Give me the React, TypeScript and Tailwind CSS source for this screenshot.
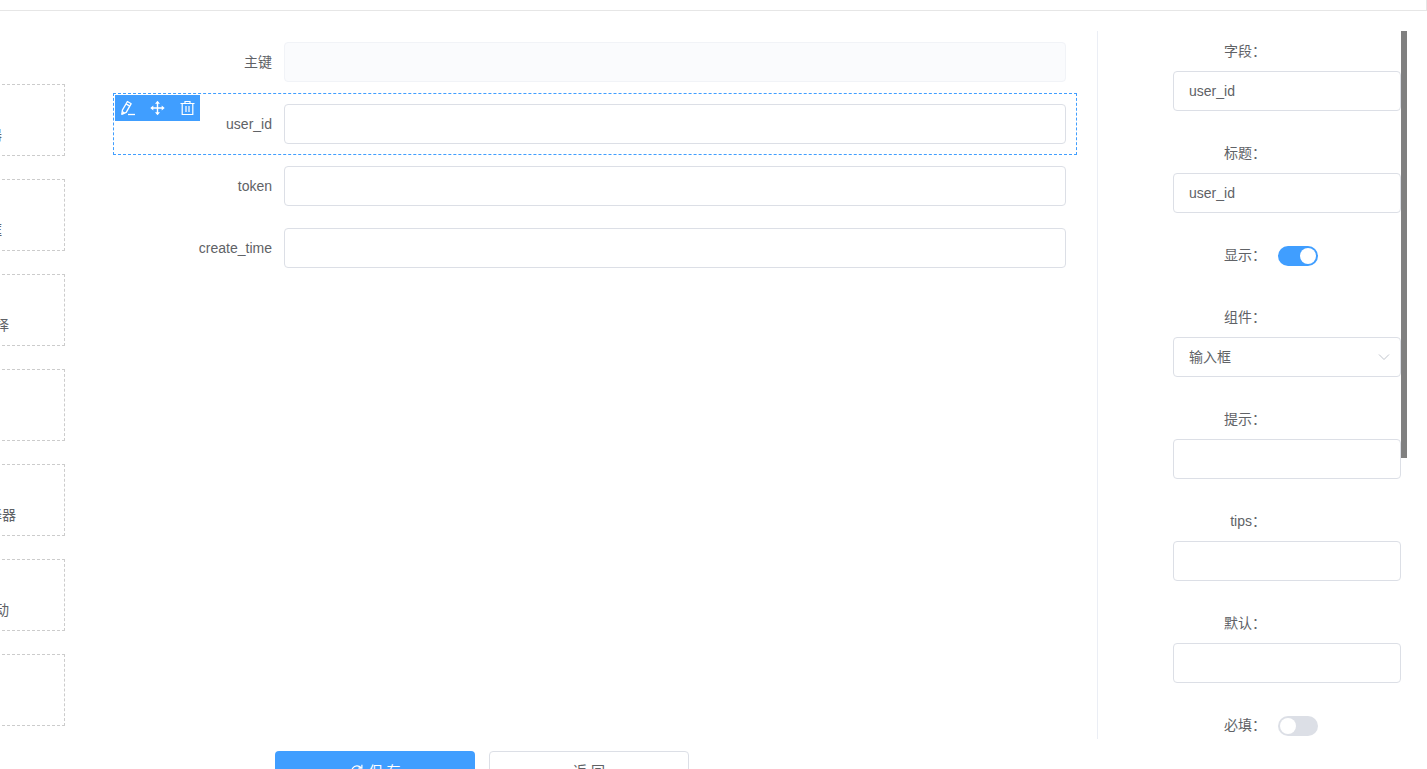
import { useState } from "react";

type Field = {
  name: string;
  label: string;
  disabled?: boolean;
};

type SettingInputProps = {
  id: string;
  label: string;
  defaultValue?: string;
};

type SettingSwitchProps = {
  id: string;
  label: string;
  checked: boolean;
  onChange: (checked: boolean) => void;
};

const widgets = [
  "计数器",
  "多选框",
  "下拉选择",
  "开关",
  "时间选择器",
  "级联联动",
  "上传",
];

const fields: Field[] = [
  { name: "id", label: "主键", disabled: true },
  { name: "user_id", label: "user_id" },
  { name: "token", label: "token" },
  { name: "create_time", label: "create_time" },
];

const iconProps = {
  viewBox: "0 0 16 16",
  fill: "none",
  stroke: "currentColor",
  className: "block size-4",
};

const EditIcon = () => (
  <svg {...iconProps} strokeWidth="1.3" strokeLinejoin="round">
    <path d="M7.4 1.5 11.2 3.7 6.2 12.3 1.8 14.3 2.4 10.1Z" />
    <path d="M6 3.9 9.8 6.1M2.2 11.6 4.5 13" />
    <path d="M8 14.5H15" />
  </svg>
);

const MoveIcon = () => (
  <svg {...iconProps} strokeWidth="1.4">
    <path d="M7.5 2.5V13.5M2 8H13" />
    <path
      d="M7.5 .8 10 3.8H5ZM7.5 15.2 5 12.2H10ZM.3 8 3.3 5.5V10.5ZM14.7 8 11.7 10.5V5.5Z"
      fill="currentColor"
      stroke="none"
    />
  </svg>
);

const DeleteIcon = () => (
  <svg {...iconProps} strokeWidth="1.2">
    <path d="M.5 3.5H14.5M5 3.5V1.5H10V3.5M2.2 3.5V14.5H12.8V3.5M6 6V12M9 6V12" />
  </svg>
);

const RefreshIcon = () => (
  <svg {...iconProps} className="block size-3.5" strokeWidth="1.4">
    <path d="M14 9A6 6 0 1 1 12.5 4M13.6 .8V4.8H9.6" />
  </svg>
);

const inputClass =
  "block h-10 w-full rounded border border-[#dcdfe6] bg-white px-[15px] text-sm text-[#606266] outline-none focus:border-[#409eff]";

const SettingInput: React.FC<SettingInputProps> = ({
  id,
  label,
  defaultValue,
}) => (
  <div className="mb-[22px]">
    <label htmlFor={id} className="block w-[105px] pr-3 text-right leading-10">
      {label}：
    </label>
    <input id={id} className={inputClass} defaultValue={defaultValue} />
  </div>
);

const SettingSwitch: React.FC<SettingSwitchProps> = ({
  id,
  label,
  checked,
  onChange,
}) => (
  <div className="mb-[22px] flex h-10 items-center">
    <label htmlFor={id} className="w-[105px] pr-3 text-right leading-10">
      {label}：
    </label>
    <input
      id={id}
      type="checkbox"
      role="switch"
      checked={checked}
      onChange={(e) => onChange(e.target.checked)}
      className="mt-0.5 flex h-5 w-10 cursor-pointer appearance-none items-center rounded-full bg-[#dcdfe6] px-0.5 before:size-4 before:rounded-full before:bg-white checked:justify-end checked:bg-[#409eff]"
    />
  </div>
);

const App: React.FC = () => {
  const [active, setActive] = useState("user_id");
  const [visible, setVisible] = useState(true);
  const [required, setRequired] = useState(false);

  return (
    <div
      lang="zh-CN"
      className="h-screen overflow-hidden bg-white font-['Liberation_Sans','Noto_Sans_CJK_SC',sans-serif] text-sm text-[#606266]"
    >
      <header className="h-[11px] border-r border-b border-[#e6e6e6]" />

      <main className="mt-5 flex h-[calc(100vh-61px)]">
        <ul className="flex w-[65px] shrink-0 flex-col items-end gap-[23px] overflow-hidden pt-[53px]">
          {widgets.map((widget) => (
            <li
              key={widget}
              className="flex h-[72px] w-[168px] shrink-0 items-end justify-center border border-dashed border-[#ccc] pb-2.5"
            >
              {widget}
            </li>
          ))}
        </ul>

        <form className="ml-12 min-w-0 flex-1 border-r border-[#ebeef5] pr-5">
          {fields.map((field) => (
            <div
              key={field.name}
              onClick={() => !field.disabled && setActive(field.name)}
              className={`relative flex items-center border border-dashed p-2.5 ${
                active === field.name
                  ? "border-[#409eff]"
                  : "border-transparent"
              }`}
            >
              {active === field.name && (
                <div className="absolute top-px left-px flex h-[26px] w-[85px] items-center gap-3.5 bg-[#409eff] pl-[5px] text-white">
                  <button type="button" aria-label="编辑">
                    <EditIcon />
                  </button>
                  <button type="button" aria-label="移动">
                    <MoveIcon />
                  </button>
                  <button type="button" aria-label="删除">
                    <DeleteIcon />
                  </button>
                </div>
              )}
              <label
                htmlFor={`field-${field.name}`}
                className="w-40 shrink-0 pr-3 text-right leading-10"
              >
                {field.label}
              </label>
              <input
                id={`field-${field.name}`}
                disabled={field.disabled}
                className={`${inputClass} disabled:border-[#f1f3f7] disabled:bg-[#fafbfd]`}
              />
            </div>
          ))}
        </form>

        <aside className="mr-5 flex w-[309px] shrink-0 overflow-hidden">
          <form className="ml-[75px] min-w-0 flex-1">
            <SettingInput id="name" label="字段" defaultValue="user_id" />
            <SettingInput id="title" label="标题" defaultValue="user_id" />
            <SettingSwitch
              id="visible"
              label="显示"
              checked={visible}
              onChange={setVisible}
            />
            <div className="mb-[22px]">
              <label
                htmlFor="component"
                className="block w-[105px] pr-3 text-right leading-10"
              >
                组件：
              </label>
              <div className="relative">
                <select
                  id="component"
                  className={`${inputClass} appearance-none`}
                >
                  <option>输入框</option>
                  <option>多选框</option>
                  <option>下拉选择</option>
                </select>
                <svg
                  viewBox="0 0 14 14"
                  fill="none"
                  stroke="currentColor"
                  className="pointer-events-none absolute top-[13px] right-2.5 size-3.5 text-[#c0c4cc]"
                >
                  <path d="M2 4.5 7 9.5 12 4.5" />
                </svg>
              </div>
            </div>
            <SettingInput id="placeholder" label="提示" />
            <SettingInput id="tips" label="tips" />
            <SettingInput id="default" label="默认" />
            <SettingSwitch
              id="required"
              label="必填"
              checked={required}
              onChange={setRequired}
            />
          </form>
          <div className="w-1.5 shrink-0">
            <div className="h-[427px] bg-[#808080]" />
          </div>
        </aside>
      </main>

      <footer className="mt-3 ml-[275px] flex gap-3.5">
        <button
          type="button"
          className="flex h-10 w-[200px] items-center justify-center gap-[5px] rounded bg-[#409eff] text-white"
        >
          <RefreshIcon />
          保 存
        </button>
        <button
          type="button"
          className="h-10 w-[200px] rounded border border-[#dcdfe6] bg-white"
        >
          返 回
        </button>
      </footer>
    </div>
  );
};

export default App;
